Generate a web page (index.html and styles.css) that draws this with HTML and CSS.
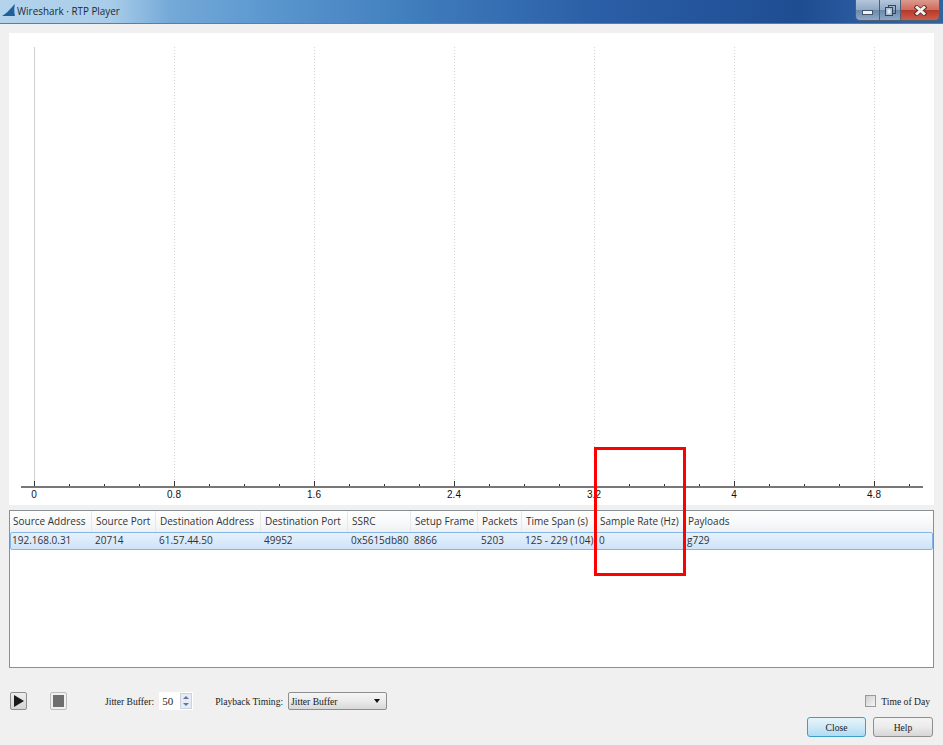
FILE: index.html
```html
<!DOCTYPE html>
<html lang="en">
<head>
    <meta charset="UTF-8">
    <title>Wireshark · RTP Player</title>
    <link rel="stylesheet" href="styles.css">
</head>
<body>
    <header class="titlebar">
        <svg class="app-icon" width="14" height="14" viewBox="0 0 14 14"><path d="M0 13 C4 11 8 6 13 1 C12 5 12 9 13 13 Z" fill="#1f5f9e"/></svg>
        <span class="title">Wireshark · RTP Player</span>
        <div class="win-buttons">
            <div class="win-btn win-min"><span class="min-glyph"></span></div>
            <div class="win-btn win-max">
                <svg width="11" height="11" viewBox="0 0 11 11" fill="none" stroke="#34465c">
                    <rect x="3.5" y="0.5" width="7" height="8"/>
                    <rect x="0.5" y="2.5" width="7" height="8" fill="#a9bdd2"/>
                    <rect x="2.5" y="4.5" width="3" height="4" fill="#dfe7ef" stroke="none"/>
                </svg>
            </div>
            <div class="win-btn win-close">
                <svg width="13" height="11" viewBox="0 0 13 11">
                    <path d="M1 1 L12 10 M12 1 L1 10" stroke="#5a2a28" stroke-width="4.5"/>
                    <path d="M2 1.5 L11 9.5 M11 1.5 L2 9.5" stroke="#f2f2f2" stroke-width="3"/>
                </svg>
            </div>
        </div>
    </header>

    <main class="content">
        <svg class="plot" width="925" height="472" viewBox="0 0 925 472">
            <g stroke="#d4d4d4" stroke-dasharray="1 2">
                <line x1="165.5" y1="14" x2="165.5" y2="450"/>
                <line x1="305.5" y1="14" x2="305.5" y2="450"/>
                <line x1="445.5" y1="14" x2="445.5" y2="450"/>
                <line x1="585.5" y1="14" x2="585.5" y2="450"/>
                <line x1="725.5" y1="14" x2="725.5" y2="450"/>
                <line x1="865.5" y1="14" x2="865.5" y2="450"/>
            </g>
            <line x1="25.5" y1="14" x2="25.5" y2="450" stroke="#cfcfcf"/>
            <line x1="12" y1="454" x2="914" y2="454" stroke="#777" stroke-width="2"/>
            <g stroke="#333">
                <line x1="25.5" y1="448" x2="25.5" y2="453"/>
                <line x1="60.5" y1="451" x2="60.5" y2="453"/>
                <line x1="95.5" y1="451" x2="95.5" y2="453"/>
                <line x1="130.5" y1="451" x2="130.5" y2="453"/>
                <line x1="165.5" y1="448" x2="165.5" y2="453"/>
                <line x1="200.5" y1="451" x2="200.5" y2="453"/>
                <line x1="235.5" y1="451" x2="235.5" y2="453"/>
                <line x1="270.5" y1="451" x2="270.5" y2="453"/>
                <line x1="305.5" y1="448" x2="305.5" y2="453"/>
                <line x1="340.5" y1="451" x2="340.5" y2="453"/>
                <line x1="375.5" y1="451" x2="375.5" y2="453"/>
                <line x1="410.5" y1="451" x2="410.5" y2="453"/>
                <line x1="445.5" y1="448" x2="445.5" y2="453"/>
                <line x1="480.5" y1="451" x2="480.5" y2="453"/>
                <line x1="515.5" y1="451" x2="515.5" y2="453"/>
                <line x1="550.5" y1="451" x2="550.5" y2="453"/>
                <line x1="585.5" y1="448" x2="585.5" y2="453"/>
                <line x1="620.5" y1="451" x2="620.5" y2="453"/>
                <line x1="655.5" y1="451" x2="655.5" y2="453"/>
                <line x1="690.5" y1="451" x2="690.5" y2="453"/>
                <line x1="725.5" y1="448" x2="725.5" y2="453"/>
                <line x1="760.5" y1="451" x2="760.5" y2="453"/>
                <line x1="795.5" y1="451" x2="795.5" y2="453"/>
                <line x1="830.5" y1="451" x2="830.5" y2="453"/>
                <line x1="865.5" y1="448" x2="865.5" y2="453"/>
                <line x1="900.5" y1="451" x2="900.5" y2="453"/>
            </g>
            <g class="axis-labels" text-anchor="middle">
                <text x="25" y="465">0</text>
                <text x="165" y="465">0.8</text>
                <text x="305" y="465">1.6</text>
                <text x="445" y="465">2.4</text>
                <text x="585" y="465">3.2</text>
                <text x="725" y="465">4</text>
                <text x="865" y="465">4.8</text>
            </g>
        </svg>

        <section class="streams">
            <div class="row head">
                <span>Source Address</span>
                <span>Source Port</span>
                <span>Destination Address</span>
                <span>Destination Port</span>
                <span>SSRC</span>
                <span>Setup Frame</span>
                <span>Packets</span>
                <span>Time Span (s)</span>
                <span>Sample Rate (Hz)</span>
                <span>Payloads</span>
            </div>
            <div class="row selected">
                <span>192.168.0.31</span>
                <span>20714</span>
                <span>61.57.44.50</span>
                <span>49952</span>
                <span>0x5615db80</span>
                <span>8866</span>
                <span>5203</span>
                <span>125 - 229 (104)</span>
                <span>0</span>
                <span>g729</span>
            </div>
        </section>
    </main>

    <footer class="controls">
        <div class="control-row">
            <button class="icon-btn play"><svg width="10" height="12" viewBox="0 0 10 12"><path d="M0 0 L10 6 L0 12 Z" fill="#1a1a1a"/></svg></button>
            <button class="icon-btn stop"><span class="stop-glyph"></span></button>
            <label class="jitter-label">Jitter Buffer:</label>
            <div class="spin">
                <span class="spin-value">50</span>
                <div class="spin-arrows">
                    <span class="spin-up"></span>
                    <span class="spin-down"></span>
                </div>
            </div>
            <label class="timing-label">Playback Timing:</label>
            <div class="combo">
                <span>Jitter Buffer</span>
                <span class="combo-arrow"></span>
            </div>
            <div class="time-of-day">
                <span class="check"></span>
                <span>Time of Day</span>
            </div>
        </div>
        <div class="button-row">
            <button class="btn default">Close</button>
            <button class="btn">Help</button>
        </div>
    </footer>

    <div class="highlight"></div>
</body>
</html>
```

FILE: styles.css
```css
body {
    margin: 0;
    width: 943px;
    height: 745px;
    overflow: hidden;
    position: relative;
    background-color: #f0f0f0;
    font-family: 'Liberation Serif', serif;
    font-size: 9.6px;
    color: #1a1a1a;
    display: flex;
    flex-direction: column;
}

/* Title bar */
.titlebar {
    height: 23px;
    flex-shrink: 0;
    display: flex;
    align-items: center;
    padding-left: 2px;
    border-bottom: 1px solid #6d7a88;
    background: linear-gradient(90deg, #b4d3ec 0, #a9cde9 110px, #74a9d8 170px, #5a97cf 270px, #3f7cbc 420px, #2a5ea6 600px, #1f4d92 800px, #2a5a9f 860px, #2f649f 943px);
}

.app-icon {
    margin-top: -3px;
}

.title {
    margin-left: 1px;
    margin-top: -2px;
    font-family: 'Open Sans', sans-serif;
    font-size: 9.9px;
    color: #1c2a38;
}

.win-buttons {
    margin-left: auto;
    margin-right: 3px;
    align-self: flex-start;
    display: flex;
    height: 20px;
    border: 1px solid #4d5f75;
    border-top: none;
    border-radius: 0 0 5px 5px;
    overflow: hidden;
}

.win-btn {
    display: flex;
    align-items: center;
    justify-content: center;
    background: linear-gradient(180deg, #b4c6da 0, #90a9c4 50%, #6c8aad 52%, #8ea9c6 100%);
    border-right: 1px solid #4d5f75;
}

.win-min {
    width: 23px;
}

.win-max {
    width: 20px;
}

.win-close {
    width: 38px;
    border-right: none;
    background: linear-gradient(180deg, #dc9a8e 0, #cf6a5a 50%, #b8382a 52%, #c8604f 100%);
}

.min-glyph {
    width: 9px;
    height: 3px;
    margin-top: 5px;
    background-color: #f0f3f6;
    border: 1px solid #44566c;
}

/* Plot and stream list */
.content {
    padding: 9px 9px 0;
    display: flex;
    flex-direction: column;
    gap: 5px;
}

.plot {
    display: block;
    background-color: #fff;
}

.axis-labels {
    font-family: 'Liberation Sans', sans-serif;
    font-size: 10px;
    fill: #111;
}

.streams {
    height: 156px;
    background-color: #fff;
    border: 1px solid #8a8f94;
    font-family: 'Open Sans', sans-serif;
    font-size: 10px;
    color: #333;
}

.row {
    display: grid;
    grid-template-columns: 82px 64px 105px 87px 63px 67px 44px 74px 88px 1fr;
    white-space: nowrap;
}

.head {
    height: 21px;
    line-height: 20px;
    background: linear-gradient(180deg, #fff 0, #f7f8f9 60%, #eef0f2 100%);
}

.head span {
    padding-left: 4px;
    border-right: 1px solid #e6e8ea;
}

.head span:first-child {
    padding-left: 3px;
}

.head span:last-child {
    border-right: none;
}

.selected {
    height: 16px;
    line-height: 15px;
    border: 1px solid #86b6e6;
    border-radius: 2px;
    background: linear-gradient(180deg, #e6f1fc 0, #cfe3f8 100%);
}

.selected span {
    padding-left: 1px;
    margin-left: 1px;
}

.selected span:first-child {
    margin-left: 0;
}

/* Bottom controls */
.controls {
    padding: 24px 10px 0;
}

.control-row {
    height: 18px;
    display: flex;
    align-items: center;
}

.icon-btn {
    width: 17px;
    height: 18px;
    padding: 0;
    display: flex;
    align-items: center;
    justify-content: center;
    border: 1px solid #8f8f8f;
    border-radius: 2px;
    background: linear-gradient(180deg, #eeeeee, #d4d4d4);
}

.stop {
    margin-left: 23px;
    border-color: #bdbdbd;
    background: #f0f0f0;
}

.stop-glyph {
    width: 11px;
    height: 12px;
    background-color: #6e6e6e;
}

.jitter-label {
    margin-left: 38px;
}

.spin {
    margin-left: 5px;
    width: 34px;
    height: 18px;
    display: flex;
    align-items: center;
    justify-content: space-between;
    background-color: #fff;
    box-sizing: border-box;
    padding-left: 3px;
    font-size: 11px;
}

.spin-arrows {
    width: 12px;
    height: 16px;
    margin-right: 1px;
    display: flex;
    flex-direction: column;
    align-items: center;
    justify-content: space-around;
    background-color: #e8ecf2;
    border: 1px solid #ccd2da;
    box-sizing: border-box;
}

.spin-up {
    border-left: 3px solid transparent;
    border-right: 3px solid transparent;
    border-bottom: 3px solid #5c74b0;
}

.spin-down {
    border-left: 3px solid transparent;
    border-right: 3px solid transparent;
    border-top: 3px solid #5c74b0;
}

.timing-label {
    margin-left: 22px;
}

.combo {
    margin-left: 5px;
    width: 99px;
    height: 18px;
    box-sizing: border-box;
    padding: 0 6px 0 2px;
    display: flex;
    align-items: center;
    justify-content: space-between;
    border: 1px solid #8f8f8f;
    border-radius: 2px;
    background: linear-gradient(180deg, #f5f5f5 0, #ebebeb 50%, #d8d8d8 100%);
}

.combo-arrow {
    border-left: 3px solid transparent;
    border-right: 3px solid transparent;
    border-top: 4px solid #111;
}

.time-of-day {
    margin-left: auto;
    margin-right: 3px;
    display: flex;
    align-items: center;
    gap: 5px;
}

.check {
    width: 9px;
    height: 10px;
    border: 1px solid #9a9a9a;
    background: linear-gradient(135deg, #d0d0d0, #f4f4f4);
}

.button-row {
    margin-top: 7px;
    display: flex;
    justify-content: flex-end;
    gap: 7px;
}

.btn {
    width: 60px;
    height: 20px;
    padding: 0;
    font-family: 'Liberation Serif', serif;
    font-size: 9.6px;
    color: #1a1a1a;
    border: 1px solid #8f8f8f;
    border-radius: 3px;
    background: linear-gradient(180deg, #f4f4f4 0, #ebebeb 50%, #d6d6d6 100%);
}

.default {
    width: 59px;
    border-color: #3c9fc8;
    background: linear-gradient(180deg, #e6f4fb 0, #cfe9f6 50%, #aedcf2 100%);
}

/* Annotation drawn over the screenshot */
.highlight {
    position: absolute;
    left: 594px;
    top: 447px;
    width: 86px;
    height: 123px;
    border: 3px solid #f00;
}
```
